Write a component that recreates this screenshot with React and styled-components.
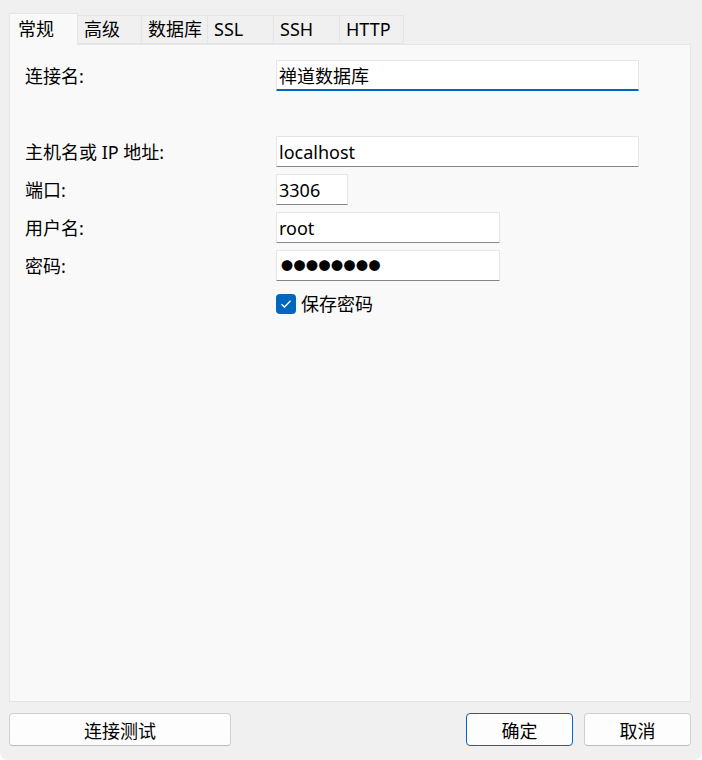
import React from "react";
import styled, { createGlobalStyle } from "styled-components";

const GlobalStyle = createGlobalStyle`
  html, body {
    margin: 0;
    padding: 0;
    background: #ffffff;
  }
  * {
    box-sizing: border-box;
  }
`;

const FONT = `"Noto Sans", "Noto Sans CJK SC", sans-serif`;

const Window = styled.div`
  width: 702px;
  height: 760px;
  background: #f0f0f0;
  padding: 12px 11px 14px 9px;
  display: flex;
  flex-direction: column;
  font-family: ${FONT};
  color: #000;
  border-radius: 0 0 8px 8px;
`;

const TabBar = styled.div`
  display: flex;
  align-items: flex-end;
  height: 32px;
  position: relative;
  z-index: 1;
`;

const Tab = styled.div`
  width: ${(p) => p.$w}px;
  height: ${(p) => (p.$active ? 32 : 29)}px;
  margin-bottom: ${(p) => (p.$active ? -1 : 0)}px;
  padding-left: ${(p) => (p.$active ? 8 : 6)}px;
  padding-bottom: 2px;
  display: flex;
  align-items: center;
  font-size: 18px;
  line-height: 1;
  background: ${(p) => (p.$active ? "#f9f9f9" : "#f0f0f0")};
  border: 1px solid #e5e5e5;
  border-bottom: ${(p) => (p.$active ? "none" : "1px solid #e5e5e5")};
  border-left: ${(p) => (p.$first || p.$active ? "1px solid #e5e5e5" : "none")};
`;

const Panel = styled.div`
  flex: 1;
  background: #f9f9f9;
  border: 1px solid #e5e5e5;
  padding: 15px 15px;
`;

const Form = styled.div`
  display: grid;
  grid-template-columns: 251px 1fr;
  grid-auto-rows: 31px;
  row-gap: 7px;
  align-items: center;
`;

const Label = styled.div`
  font-size: 18px;
  line-height: 1;
  padding-top: 1px;
`;

const Field = styled.input`
  width: ${(p) => p.$w}px;
  height: 31px;
  background: #ffffff;
  border: 1px solid #e5e5e5;
  border-bottom: ${(p) => (p.$focused ? "2px solid #0067c0" : "1px solid #868686")};
  border-radius: 1px;
  padding: 0 2px;
  font-family: ${FONT};
  font-size: ${(p) => (p.$secret ? 12 : 18)}px;
  letter-spacing: ${(p) => (p.$secret ? "0.5px" : "normal")};
  padding-left: ${(p) => (p.$secret ? 4 : 2)}px;
  color: #000;
  outline: none;
`;

const CheckRow = styled.label`
  display: flex;
  align-items: center;
  gap: 5px;
  margin-top: 0;
  font-size: 18px;
  line-height: 1;
`;

const Box = styled.span`
  width: 20px;
  height: 20px;
  border-radius: 4px;
  background: #0067c0;
  display: flex;
  align-items: center;
  justify-content: center;
`;

const Footer = styled.div`
  display: flex;
  align-items: center;
  gap: 11px;
  margin-top: 11px;
  height: 33px;
`;

const Button = styled.button`
  width: ${(p) => p.$w}px;
  height: 33px;
  background: #fdfdfd;
  border: 1px solid ${(p) => (p.$primary ? "#0067c0" : "#d0d0d0")};
  border-bottom-color: ${(p) => (p.$primary ? "#0067c0" : "#bcbcbc")};
  border-radius: 4px;
  font-family: ${FONT};
  font-size: 18px;
  color: #000;
  padding: 0;
`;

const Spacer = styled.div`
  flex: 1;
`;

const tabs = [
  { name: "常规", w: 69 },
  { name: "高级", w: 64 },
  { name: "数据库", w: 66 },
  { name: "SSL", w: 66 },
  { name: "SSH", w: 66 },
  { name: "HTTP", w: 64 },
];

export default function App() {
  return (
    <>
      <GlobalStyle />
      <Window>
        <TabBar>
          {tabs.map((t, i) => (
            <Tab key={t.name} $w={t.w} $active={i === 0} $first={i === 0}>
              {t.name}
            </Tab>
          ))}
        </TabBar>
        <Panel>
          <Form>
            <Label>连接名:</Label>
            <div>
              <Field $w={363} $focused readOnly value="禅道数据库" />
            </div>
            <div />
            <div />
            <Label>主机名或 IP 地址:</Label>
            <div>
              <Field $w={363} readOnly value="localhost" />
            </div>
            <Label>端口:</Label>
            <div>
              <Field $w={72} readOnly value="3306" />
            </div>
            <Label>用户名:</Label>
            <div>
              <Field $w={224} readOnly value="root" />
            </div>
            <Label>密码:</Label>
            <div>
              <Field $w={224} $secret readOnly value="●●●●●●●●" />
            </div>
            <div />
            <CheckRow>
              <Box>
                <svg width="12" height="10" viewBox="0 0 12 10">
                  <path d="M1.5 5.2 L4.5 8 L10.5 1.8" fill="none" stroke="#fff" strokeWidth="1.3" />
                </svg>
              </Box>
              保存密码
            </CheckRow>
          </Form>
        </Panel>
        <Footer>
          <Button $w={222}>连接测试</Button>
          <Spacer />
          <Button $w={107} $primary>确定</Button>
          <Button $w={107}>取消</Button>
        </Footer>
      </Window>
    </>
  );
}
